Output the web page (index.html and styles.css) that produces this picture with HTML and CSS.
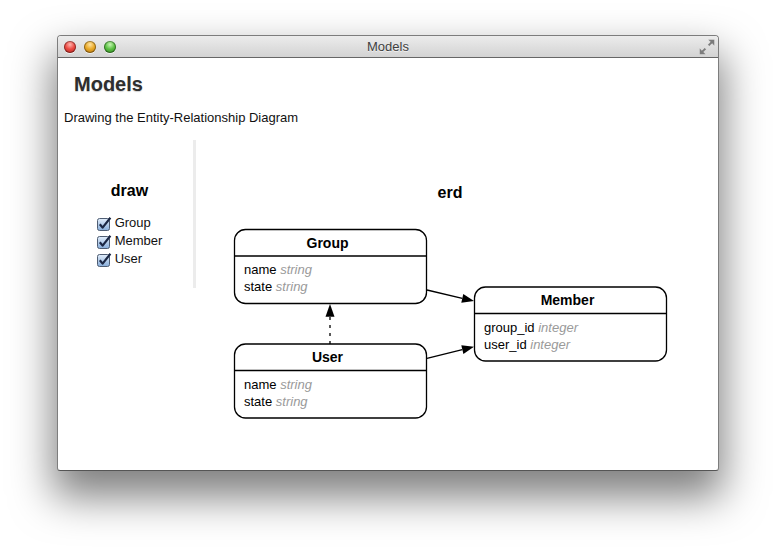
FILE: index.html
```
<!DOCTYPE html>
<html lang="en">
<head><meta charset="UTF-8"/><meta name="viewport" content="width=device-width, initial-scale=1.0"/>
<title>Models</title>
<link rel="stylesheet" href="styles.css">
</head><body>
<div class="window">
 <div class="titlebar">
  <div class="lights"><span class="light red"></span><span class="light yellow"></span><span class="light green"></span></div>
  <div class="title">Models</div>
  <svg class="fullscreen" width="16" height="16" viewBox="0 0 16 16">
   <g fill="#7c7c7c" stroke="#fff" stroke-opacity=".6" stroke-width=".5">
    <path d="M15.5 0.5 L15.5 7 L13 4.6 L10.3 7.3 L8.7 5.7 L11.4 3 L9 0.5 Z"/>
    <path d="M0.5 15.5 L0.5 9 L3 11.4 L5.7 8.7 L7.3 10.3 L4.6 13 L7 15.5 Z"/>
   </g>
  </svg>
 </div>
 <div class="content">
  <h1>Models</h1>
  <p class="lead">Drawing the Entity-Relationship Diagram</p>
  <div class="columns">
   <div class="side">
    <h3>draw</h3>
    <ul class="checks">
     <li><svg class="cb" width="15" height="14" viewBox="0 0 15 14"><defs><linearGradient id="cbg" x1="0" y1="0" x2="0" y2="1"><stop offset="0" stop-color="#e3eefb"/><stop offset="1" stop-color="#86acd9"/></linearGradient></defs><rect x="0.5" y="1.5" width="12" height="12" rx="2" fill="url(#cbg)" stroke="#4f5d73"/><path d="M2.8 7.2 L5.6 10.6 L13.4 0.8" fill="none" stroke="#1b2744" stroke-width="2.2" stroke-linejoin="round"/></svg>Group</li>
     <li><svg class="cb" width="15" height="14" viewBox="0 0 15 14"><rect x="0.5" y="1.5" width="12" height="12" rx="2" fill="url(#cbg)" stroke="#4f5d73"/><path d="M2.8 7.2 L5.6 10.6 L13.4 0.8" fill="none" stroke="#1b2744" stroke-width="2.2" stroke-linejoin="round"/></svg>Member</li>
     <li><svg class="cb" width="15" height="14" viewBox="0 0 15 14"><rect x="0.5" y="1.5" width="12" height="12" rx="2" fill="url(#cbg)" stroke="#4f5d73"/><path d="M2.8 7.2 L5.6 10.6 L13.4 0.8" fill="none" stroke="#1b2744" stroke-width="2.2" stroke-linejoin="round"/></svg>User</li>
    </ul>
   </div>
   <div class="main">
    <h3>erd</h3>
    <svg class="erd" width="440" height="196" viewBox="0 0 440 196">
     <g fill="#fff" stroke="#000" stroke-width="1.3">
      <rect x="4.5" y="3.5" width="192" height="74" rx="11"/>
      <rect x="244.5" y="61" width="192" height="74" rx="11"/>
      <rect x="4.5" y="118" width="192" height="74" rx="11"/>
      <path d="M4.5 30 H196.5 M244.5 87.5 H436.5 M4.5 144.5 H196.5"/>
      <path d="M197 64 L232.3 72.3 M197 132.3 L232.3 123.6" fill="none"/>
      <path d="M100 118 V91" fill="none" stroke-dasharray="3 5"/>
     </g>
     <g fill="#000">
      <polygon points="244,75 233.3,67.9 231.3,76.7"/>
      <polygon points="244,120.7 233.4,128 231.3,119.2"/>
      <polygon points="100,78 95.5,90.7 104.5,90.7"/>
     </g>
     <g class="ttl">
      <text x="97.5" y="21.5">Group</text>
      <text x="337.5" y="79">Member</text>
      <text x="97.5" y="136">User</text>
     </g>
     <g class="fld">
      <text x="14" y="47.5">name <tspan class="typ">string</tspan></text>
      <text x="14" y="64.5">state <tspan class="typ">string</tspan></text>
      <text x="254" y="105.5">group_id <tspan class="typ">integer</tspan></text>
      <text x="254" y="123">user_id <tspan class="typ">integer</tspan></text>
      <text x="14" y="163">name <tspan class="typ">string</tspan></text>
      <text x="14" y="180">state <tspan class="typ">string</tspan></text>
     </g>
    </svg>
   </div>
  </div>
 </div>
</div>
</body></html>
```

FILE: styles.css
```
html,body{margin:0;background:#fff;}
body{box-sizing:border-box;min-height:550px;padding:35px 57px 0;font-family:"Liberation Sans",Arial,sans-serif;}
.window{box-sizing:border-box;width:662px;height:436px;border:1px solid #7d7d7d;border-bottom-color:#555;border-radius:4px 4px 3px 3px;background:#fff;box-shadow:0 22px 42px 4px rgba(0,0,0,.5);overflow:hidden;}
.titlebar{display:grid;grid-template-columns:1fr auto 1fr;align-items:center;height:21px;border-bottom:1px solid #666;background:linear-gradient(#ececec,#d3d3d3);}
.lights{display:flex;gap:8px;padding-left:6px;}
.light{width:12px;height:12px;border-radius:50%;box-shadow:inset 0 0 0 1px rgba(0,0,0,.35),0 1px 0 rgba(255,255,255,.6);}
.red{background:radial-gradient(circle at 50% 30%,#ffb4ae 0,#ec4a43 45%,#a8201a 100%);}
.yellow{background:radial-gradient(circle at 50% 30%,#ffe3a0 0,#e9a927 45%,#a86a0c 100%);}
.green{background:radial-gradient(circle at 50% 30%,#c7f5b3 0,#5cc144 45%,#2a7b1c 100%);}
.title{font-size:13px;color:#3f3f3f;text-shadow:0 1px 0 rgba(255,255,255,.6);}
.fullscreen{justify-self:end;margin-right:3px;}
.content{padding:0 14px 0 6px;}
h1{margin:15px 0 14px;padding-left:10px;font-size:20px;line-height:23px;color:#2e2e2e;text-shadow:0 1px 1px rgba(0,0,0,.18);}
.lead{margin:0 0 15px;font-size:13px;line-height:15px;color:#111;}
.columns{display:flex;align-items:flex-start;}
.side{width:127px;border-right:3px solid #ececec;text-align:center;padding:42px 0 0 2px;height:106px;}
h3{margin:0;font-size:16px;line-height:18px;color:#000;}
.checks{display:inline-block;vertical-align:top;list-style:none;margin:14px 0 0;padding:0;text-align:left;font-size:13px;line-height:18px;color:#111;}
.checks li{display:flex;align-items:center;}
.cb{margin:1px 3px 0 0;}
.main{flex:1;text-align:center;padding-top:44px;}
.erd{display:block;margin:24px auto 0;}
.ttl text{font-weight:bold;font-size:14px;text-anchor:middle;}
.fld text{font-size:13px;fill:#000;}
.fld .typ{font-style:italic;fill:#9a9a9a;}
```
